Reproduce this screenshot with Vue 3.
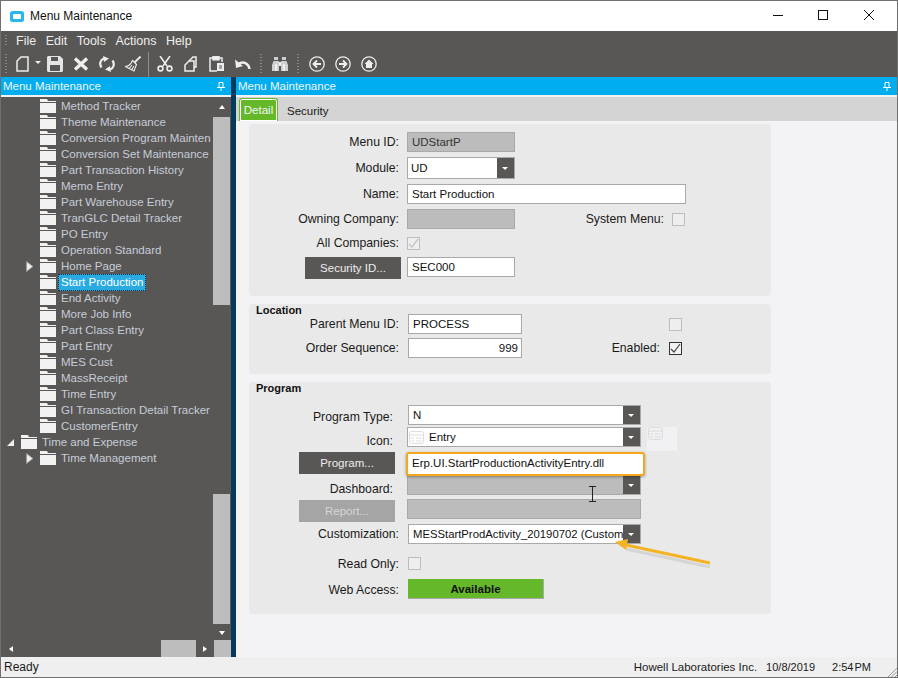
<script setup>
const menus = ['File', 'Edit', 'Tools', 'Actions', 'Help']

// top = first level node, arrow = expander shown in front of the folder
const tree = [
  { text: 'Method Tracker' },
  { text: 'Theme Maintenance' },
  { text: 'Conversion Program Mainten' },
  { text: 'Conversion Set Maintenance' },
  { text: 'Part Transaction History' },
  { text: 'Memo Entry' },
  { text: 'Part Warehouse Entry' },
  { text: 'TranGLC Detail Tracker' },
  { text: 'PO Entry' },
  { text: 'Operation Standard' },
  { text: 'Home Page', arrow: 'closed' },
  { text: 'Start Production', selected: true },
  { text: 'End Activity' },
  { text: 'More Job Info' },
  { text: 'Part Class Entry' },
  { text: 'Part Entry' },
  { text: 'MES Cust' },
  { text: 'MassReceipt' },
  { text: 'Time Entry' },
  { text: 'GI Transaction Detail Tracker' },
  { text: 'CustomerEntry' },
  { text: 'Time and Expense', top: true, arrow: 'open' },
  { text: 'Time Management', arrow: 'closed' }
]
</script>

<template>
  <div class="window">
    <div class="titlebar">
      <svg class="app-icon" width="14" height="11" viewBox="0 0 14 11">
        <rect width="14" height="11" rx="2.5" fill="#29b6ea" />
        <rect x="3" y="3" width="8" height="5" rx="1" fill="#fff" />
      </svg>
      <span class="title">Menu Maintenance</span>
      <div class="controls">
        <svg width="120" height="12" viewBox="0 0 120 12" fill="none" stroke="#111" stroke-width="1">
          <path d="M0 5.500h10" />
          <rect x="45.500" y="0.500" width="9" height="9" />
          <path d="M91 0l10 10M101 0l-10 10" />
        </svg>
      </div>
    </div>

    <div class="menubar">
      <span class="grip"></span>
      <span v-for="m in menus" :key="m" class="menu-item">{{ m }}</span>
    </div>

    <div class="toolbar">
      <span class="grip tall"></span>
      <svg class="new" width="13" height="16" viewBox="0 0 13 16" fill="none" stroke="#eee" stroke-width="1.500">
        <path d="M5 1h7v14H1V5z" />
      </svg>
      <span class="caret"></span>
      <div class="tool-group first">
        <svg width="16" height="16" viewBox="0 0 16 16" fill="#e4e4e4">
          <path d="M1 0h12l3 3v12l-1 1H1l-1-1V1zM4 1v4h7V1zM3 9v6h10V9z" fill-rule="evenodd" />
        </svg>
        <svg width="16" height="16" viewBox="0 0 16 16" fill="none" stroke="#eee" stroke-width="3.400">
          <path d="M2 2.500l12 11M14 2.500l-12 11" />
        </svg>
        <svg width="16" height="16" viewBox="0 0 16 16" fill="none" stroke="#eee" stroke-width="2.200">
          <path d="M2.500 11.500C0 8 1.500 3.500 5 2.500M13.500 4.500C16 8 14.500 12.500 11 13.500" />
          <path d="M4 0l6 2.500-5 3.500zM12 16l-6-2.500 5-3.500z" fill="#eee" stroke="none" />
        </svg>
        <svg width="16" height="16" viewBox="0 0 16 16" fill="none" stroke="#eee" stroke-width="1.100">
          <path d="M15.500 .5L9.500 6.500" stroke-width="1.800" />
          <path d="M7.500 4.500l4 4-2.500 6.500-9-4.500c4 0 6-2.500 7.500-6z" />
          <path d="M4 12.500l3-3.500M6.500 14l2.500-4" />
        </svg>
      </div>
      <span class="sep"></span>
      <div class="tool-group">
        <svg width="16" height="16" viewBox="0 0 16 16" fill="none" stroke="#eee" stroke-width="1.600">
          <path d="M3 0l7 10M13 0L6 10" />
          <circle cx="3.500" cy="12.500" r="2.400" />
          <circle cx="12.500" cy="12.500" r="2.400" />
        </svg>
        <svg width="16" height="16" viewBox="0 0 16 16" fill="none" stroke="#eee" stroke-width="1.500">
          <path d="M6 5l4-4h3v10h-2" />
          <path d="M6 5h5v10H2V9z" />
        </svg>
        <svg width="16" height="16" viewBox="0 0 16 16" fill="none" stroke="#eee" stroke-width="1.500">
          <path d="M4 2H1v13h7M10 2h3v4" />
          <rect x="4" y="0.800" width="6" height="3" fill="#eee" />
          <path d="M8 7h7v8H8z" fill="#eee" stroke="none" />
          <path d="M10 10h3M10 12h3" stroke="#595755" stroke-width="1" />
        </svg>
        <svg width="16" height="16" viewBox="0 0 16 16" fill="none" stroke="#eee" stroke-width="2.400">
          <path d="M14.500 13C14 8 9 4.500 3 8" />
          <path d="M0 3.500l1 8.500 7-2z" fill="#eee" stroke="none" />
        </svg>
      </div>
      <span class="grip tall spaced"></span>
      <svg class="binoculars" width="16" height="16" viewBox="0 0 16 16">
        <path d="M2 1h4v3H2zM10 1h4v3h-4z" fill="#cfcfcf" />
        <path d="M1.500 5H7v10H0V9zM9 5h5.500L16 9v6H9z" fill="#cfcfcf" />
        <path d="M3 8h2v7H3zM11 8h2v7h-2z" fill="#efefef" />
        <path d="M7 6h2v4H7z" fill="#efefef" />
      </svg>
      <span class="grip tall spaced"></span>
      <div class="tool-group nav">
        <svg width="16" height="16" viewBox="0 0 16 16" fill="none" stroke="#eee" stroke-width="1.300">
          <circle cx="8" cy="8" r="7.200" />
          <path d="M12 8H5M8 4.500L4.500 8 8 11.500" stroke-width="1.800" />
        </svg>
        <svg width="16" height="16" viewBox="0 0 16 16" fill="none" stroke="#eee" stroke-width="1.300">
          <circle cx="8" cy="8" r="7.200" />
          <path d="M4 8h7M8 4.500L11.500 8 8 11.500" stroke-width="1.800" />
        </svg>
        <svg width="16" height="16" viewBox="0 0 16 16" fill="none" stroke="#eee" stroke-width="1.300">
          <circle cx="8" cy="8" r="7.200" />
          <path d="M8 3.500L3.500 8H5v4h6V8h1.500z" fill="#eee" stroke="none" />
        </svg>
      </div>
    </div>

    <div class="main">
      <div class="left">
        <div class="pane-head">
          <span>Menu Maintenance</span>
          <svg class="pin" width="8" height="9" viewBox="0 0 8 9" fill="none" stroke="#fff">
            <path d="M2 .5h4v5H2zM0 5.500h8M4 6v3" />
          </svg>
        </div>
        <div class="left-body">
          <div class="tree-wrap">
            <div class="tree">
              <div v-for="item in tree" :key="item.text" class="node" :class="{ top: item.top }">
                <span class="expander">
                  <svg v-if="item.arrow === 'closed'" width="8" height="11" viewBox="0 0 8 11">
                    <path d="M.5 .5L7 5.500.5 10.500z" fill="#eee" stroke="#999" />
                  </svg>
                  <svg v-if="item.arrow === 'open'" width="7" height="7" viewBox="0 0 7 7">
                    <path d="M7 0v7H0z" fill="#eee" />
                  </svg>
                </span>
                <svg class="folder" width="16" height="14" viewBox="0 0 16 14">
                  <path d="M0 0h7l1 2h8v1H0z" fill="#f2f2f2" />
                  <path d="M0 4h16v10H0z" fill="#f2f2f2" />
                </svg>
                <span class="node-text" :class="{ selected: item.selected }">{{ item.text }}</span>
              </div>
            </div>
            <div class="vscroll">
              <span class="arrow-up"></span>
              <div class="thumb upper"></div>
              <div class="track"></div>
              <div class="thumb lower"></div>
              <span class="arrow-down"></span>
            </div>
          </div>
          <div class="hscroll">
            <span class="arrow-left"></span>
            <div class="hthumb"></div>
            <span class="arrow-right"></span>
            <div class="corner"></div>
          </div>
        </div>
      </div>

      <div class="divider"></div>

      <div class="right">
        <div class="pane-head">
          <span>Menu Maintenance</span>
          <svg class="pin" width="8" height="9" viewBox="0 0 8 9" fill="none" stroke="#fff">
            <path d="M2 .5h4v5H2zM0 5.500h8M4 6v3" />
          </svg>
        </div>
        <div class="tabs">
          <div class="tab active"><span>Detail</span></div>
          <div class="tab">Security</div>
        </div>

        <div class="content">
          <section class="panel general">
            <div class="row h20">
              <label class="lbl">Menu ID:</label>
              <div class="field disabled w108 dark-text">UDStartP</div>
            </div>
            <div class="row h22 mt5">
              <label class="lbl">Module:</label>
              <div class="field combo w108 tall-field">UD<span class="drop"></span></div>
            </div>
            <div class="row h20 mt5">
              <label class="lbl">Name:</label>
              <div class="field w279">Start Production</div>
            </div>
            <div class="row h20 mt5">
              <label class="lbl">Owning Company:</label>
              <div class="field disabled w108"></div>
              <label class="lbl side">System Menu:</label>
              <span class="check"></span>
            </div>
            <div class="row h20 mt4">
              <label class="lbl">All Companies:</label>
              <span class="check">
                <svg width="11" height="11" viewBox="0 0 11 11" fill="none" stroke="#c4c4c4" stroke-width="1.300">
                  <path d="M1 6l3 3 6-8" />
                </svg>
              </span>
            </div>
            <div class="row h22 mt4">
              <button class="btn security">Security ID...</button>
              <div class="field w108 field-top">SEC000</div>
            </div>
          </section>

          <section class="panel location">
            <h4 class="panel-title short">Location</h4>
            <div class="row h20">
              <label class="lbl">Parent Menu ID:</label>
              <div class="field w114 shift">PROCESS</div>
              <span class="check loc-check"></span>
            </div>
            <div class="row h20 mt4">
              <label class="lbl">Order Sequence:</label>
              <div class="field w114 shift num">999</div>
              <label class="lbl enabled">Enabled:</label>
              <span class="check on">
                <svg width="11" height="11" viewBox="0 0 11 11" fill="none" stroke="#444" stroke-width="1.200">
                  <path d="M1 6l3 3 6-8" />
                </svg>
              </span>
            </div>
          </section>

          <section class="panel program">
            <h4 class="panel-title">Program</h4>
            <div class="row h20">
              <label class="lbl lbl-prog low-2">Program Type:</label>
              <div class="field combo w233 shift">N<span class="drop"></span></div>
            </div>
            <div class="row h20 mt2">
              <label class="lbl lbl-prog low">Icon:</label>
              <div class="field combo w234 prog-icon">
                <svg class="entry-icon" width="15" height="13" viewBox="0 0 15 13" fill="none" stroke="#ddd">
                  <rect x=".5" y=".5" width="14" height="12" rx="2" />
                  <path d="M1 4h13M2 7h3M7 7h6M2 10h3M7 10h6" />
                </svg>
                Entry<span class="drop"></span>
              </div>
              <div class="icon-preview">
                <svg width="15" height="13" viewBox="0 0 15 13" fill="none" stroke="#dcdcdc">
                  <rect x=".5" y=".5" width="14" height="12" rx="2" />
                  <path d="M1 4h13M2 7h3M7 7h6M2 10h3M7 10h6" />
                </svg>
              </div>
            </div>
            <div class="row h24 mt5">
              <button class="btn prog-btn">Program...</button>
              <div class="callout">Erp.UI.StartProductionActivityEntry.dll</div>
            </div>
            <div class="row h20 up1">
              <label class="lbl lbl-prog low">Dashboard:</label>
              <div class="field combo disabled w234"><span class="drop"></span></div>
            </div>
            <div class="row h22 mt4">
              <button class="btn prog-btn off">Report...</button>
              <div class="field disabled w234 field-top"></div>
            </div>
            <div class="row h20 mt3">
              <label class="lbl">Customization:</label>
              <div class="field combo w233 shift tight">MESStartProdActivity_20190702 (Custom<span class="drop"></span></div>
            </div>
            <div class="row h14 mt12">
              <label class="lbl low-1">Read Only:</label>
              <span class="check shift"></span>
            </div>
            <div class="row h20 mt9">
              <label class="lbl low-1">Web Access:</label>
              <div class="available shift">Available</div>
            </div>
          </section>

          <svg class="annot" width="110" height="50" viewBox="0 0 110 50">
            <path d="M98 32L14 14" stroke="#888" stroke-opacity=".2" stroke-width="3" transform="translate(0 3)" />
            <path d="M98 31L14 13" stroke="#f5b324" stroke-width="3" />
            <path d="M3 10l13-3-2 11z" fill="#f5b324" />
          </svg>
          <svg class="ibeam" width="9" height="16" viewBox="0 0 9 16" fill="none" stroke="#222">
            <path d="M1 .5h7M1 15.500h7M4.500 1v14" />
          </svg>
        </div>
      </div>
    </div>

    <div class="statusbar">
      <span class="ready">Ready</span>
      <span class="company">Howell Laboratories Inc.</span>
      <span class="date">10/8/2019</span>
      <span class="time">2:54 PM</span>
      <svg class="size-grip" width="10" height="10" viewBox="0 0 10 10" stroke="#999" fill="none">
        <path d="M10 1L1 10M10 4.500L4.500 10M10 8L8 10" />
      </svg>
    </div>
  </div>
</template>

<style>
html, body {
  margin: 0;
  background: #fff;
}
</style>

<style scoped>
.window {
  width: 898px;
  height: 678px;
  box-sizing: border-box;
  border: 1px solid #707070;
  display: flex;
  flex-direction: column;
  overflow: hidden;
  position: relative;
  font-family: "Liberation Sans", Arial, sans-serif;
  font-size: 11.500px;
  color: #1a1a1a;
  background: #fff;
}

.titlebar {
  height: 30px;
  display: flex;
  align-items: center;
  flex-shrink: 0;
  padding-left: 9px;
}
.title {
  margin-left: 6px;
  color: #111;
  font-size: 12px;
}
.controls {
  margin-left: auto;
  margin-right: 4px;
  display: flex;
}

.menubar {
  height: 20px;
  background: #595755;
  display: flex;
  align-items: center;
  color: #eee;
  flex-shrink: 0;
  padding-left: 4px;
  font-size: 12.500px;
}
.menu-item {
  margin-left: 9px;
}
.menu-item + .menu-item {
  margin-left: 9.500px;
}
.grip {
  width: 2px;
  height: 12px;
  background: repeating-linear-gradient(#8a8886 0 1px, transparent 1px 3px);
}
.grip.tall {
  height: 20px;
}

.toolbar {
  height: 26px;
  background: #595755;
  display: flex;
  align-items: center;
  flex-shrink: 0;
  padding-left: 4px;
}
.new {
  margin-left: 9px;
}
.caret {
  margin-left: 6px;
  margin-bottom: 3px;
  border: 3px solid transparent;
  border-top-color: #eee;
  border-bottom-width: 0;
}
.tool-group {
  display: flex;
  gap: 10px;
}
.tool-group.first {
  margin-left: 6px;
}
.sep {
  width: 1px;
  height: 25px;
  background: #8f8d8b;
  margin: 0 8px 0 7px;
}
.grip.spaced {
  margin-left: 9px;
}
.binoculars {
  margin-left: 10px;
}
.nav {
  margin-left: 10px;
}

.main {
  flex: 1;
  display: flex;
  min-height: 0;
}

.left {
  width: 230px;
  display: flex;
  flex-direction: column;
  background: #595755;
  flex-shrink: 0;
}
.divider {
  width: 5px;
  background: #063a5c;
  flex-shrink: 0;
}
.right {
  flex: 1;
  display: flex;
  flex-direction: column;
  min-width: 0;
}

.pane-head {
  height: 18px;
  background: #00aeef;
  color: #f4f4f4;
  display: flex;
  align-items: center;
  justify-content: space-between;
  padding: 0 6px 0 2px;
  flex-shrink: 0;
}
.pin {
  display: block;
}

.left-body {
  flex: 1;
  min-height: 0;
  display: flex;
  flex-direction: column;
  border-top: 2px solid #f2f2f2;
}
.tree-wrap {
  flex: 1;
  min-height: 0;
  display: flex;
}
.tree {
  width: 212px;
  overflow: hidden;
  padding-top: 1px;
  box-sizing: border-box;
}
.node {
  height: 16px;
  display: flex;
  align-items: center;
  white-space: nowrap;
  padding-left: 25px;
  color: #c6ccd8;
}
.node.top {
  padding-left: 6px;
}
.expander {
  width: 14px;
  height: 14px;
  display: flex;
  align-items: center;
  flex-shrink: 0;
}
.node .folder {
  flex-shrink: 0;
}
.node-text {
  padding: 0 2px;
  line-height: 15px;
  border: 1px solid transparent;
  margin-left: 2px;
}
.node-text.selected {
  background: #29abe2;
  color: #fff;
  border: 1px dotted #0b2a3a;
}

.vscroll {
  width: 17px;
  display: flex;
  flex-direction: column;
  align-items: center;
  flex-shrink: 0;
}
.arrow-up {
  margin-top: 8px;
  margin-bottom: 8px;
  border: 4px solid transparent;
  border-top-width: 0;
  border-bottom: 4px solid #fff;
  border-left-width: 3.500px;
  border-right-width: 3.500px;
  flex-shrink: 0;
}
.thumb {
  width: 17px;
  background: #bdbdbd;
}
.thumb.upper {
  height: 188px;
}
.track {
  height: 189px;
}
.thumb.lower {
  height: 130px;
}
.arrow-down {
  margin-top: 7px;
  border: 3.500px solid transparent;
  border-top: 4px solid #fff;
  border-bottom-width: 0;
}

.hscroll {
  height: 17px;
  display: flex;
  align-items: center;
  flex-shrink: 0;
}
.arrow-left {
  margin-left: 8px;
  border: 3.500px solid transparent;
  border-right: 4px solid #fff;
  border-left-width: 0;
}
.hthumb {
  width: 36px;
  height: 17px;
  background: #bdbdbd;
  margin-left: 148px;
}
.arrow-right {
  margin-left: 7px;
  border: 3.500px solid transparent;
  border-left: 4px solid #fff;
  border-right-width: 0;
}
.corner {
  width: 17px;
  height: 17px;
  background: #bdbdbd;
  margin-left: 7px;
}

.tabs {
  height: 24px;
  margin-top: 2px;
  background: #d4d4d4;
  display: flex;
  align-items: flex-end;
  padding-left: 3px;
  flex-shrink: 0;
  box-shadow: 0 -2px 0 #f2f2f2;
}
.tab {
  height: 23px;
  line-height: 27px;
  padding: 0 9px;
  color: #1a1a1a;
}
.tab.active {
  width: 39px;
  box-sizing: border-box;
  padding: 0;
  background: #65b82a;
  border: 1px solid #65b82a;
  border-bottom: 0;
  border-radius: 3px 3px 0 0;
  color: #f4f4f4;
  line-height: 23px;
  text-align: center;
  box-shadow: inset 0 0 0 1px #fff;
}

.content {
  flex: 1;
  min-height: 0;
  background: #f3f3f5;
  padding: 3px 0 0 13px;
  position: relative;
}

.panel {
  width: 522px;
  background: #e9e9e9;
  border-radius: 4px;
  box-sizing: border-box;
}
.general {
  height: 172px;
  padding-top: 8px;
}
.location {
  height: 70px;
  margin-top: 8px;
}
.program {
  height: 232px;
  margin-top: 8px;
}
.panel-title {
  margin: 0;
  padding-left: 7px;
  height: 23px;
  font-size: 11px;
  font-weight: bold;
  line-height: 12px;
  color: #111;
}
.panel-title.short {
  height: 10px;
}

.row {
  display: flex;
  align-items: center;
}
.h14 { height: 14px; }
.h20 { height: 20px; }
.h22 { height: 22px; }
.h24 { height: 24px; }
.mt2 { margin-top: 2px; }
.mt3 { margin-top: 3px; }
.mt4 { margin-top: 4px; }
.mt5 { margin-top: 5px; }
.mt9 { margin-top: 9px; }
.mt12 { margin-top: 12px; }
.up1 { margin-top: -1px; }

.lbl {
  width: 150px;
  text-align: right;
  white-space: nowrap;
  flex-shrink: 0;
  margin-right: 8px;
  color: #1a1a1a;
  font-size: 12.250px;
}
.lbl-prog {
  width: 144px;
  margin-right: 14px;
}
.lbl.low {
  margin-top: 8px;
}
.lbl.low-2 {
  margin-top: 4px;
}
.lbl.low-1 {
  margin-top: 2px;
}
.lbl.side {
  width: 149px;
  margin-right: 8px;
}
.lbl.enabled {
  width: 138px;
  margin-right: 9px;
}

.field {
  height: 20px;
  box-sizing: border-box;
  border: 1px solid #a9a9a9;
  background: #fff;
  line-height: 18px;
  padding-left: 4px;
  flex-shrink: 0;
  position: relative;
  white-space: nowrap;
  overflow: hidden;
  color: #111;
}
.tall-field {
  height: 22px;
  line-height: 20px;
  padding-left: 3px;
}
.field-top {
  align-self: flex-start;
}
.field.disabled {
  background: #bcbcbc;
}
.dark-text {
  color: #333;
}
.w108 { width: 108px; }
.w114 { width: 114px; }
.w233 { width: 233px; }
.w234 { width: 234px; }
.w279 { width: 279px; }
.shift {
  margin-left: 1px;
}
.tight {
  font-size: 11.300px;
}
.num {
  text-align: right;
  padding-right: 3px;
}
.combo {
  padding-right: 18px;
}
.prog-icon {
  display: flex;
  align-items: center;
  padding-left: 1px;
}
.entry-icon {
  margin-right: 5px;
}
.drop {
  position: absolute;
  right: 0;
  top: 0;
  bottom: 0;
  width: 17px;
  background: #595755;
}
.drop::after {
  content: "";
  position: absolute;
  left: 5px;
  top: 50%;
  margin-top: -1px;
  border: 3px solid transparent;
  border-top: 3px solid #fff;
  border-bottom-width: 0;
}

.icon-preview {
  width: 30px;
  height: 24px;
  background: #f1f1f3;
  margin-left: 6px;
  align-self: flex-start;
  padding-left: 1px;
  box-sizing: border-box;
}

.check {
  width: 13px;
  height: 13px;
  box-sizing: border-box;
  border: 1px solid #bdbdbd;
  background: #eeeeee;
  display: flex;
  align-items: center;
  justify-content: center;
  flex-shrink: 0;
}
.check.on {
  border-color: #333;
  background: #f3f3f3;
}
.loc-check {
  margin-left: 147px;
}

.btn {
  width: 96px;
  height: 22px;
  border: 0;
  padding: 0;
  background: #595755;
  color: #eee;
  font: inherit;
  flex-shrink: 0;
}
.btn.security {
  margin-left: 56px;
  margin-right: 6px;
}
.btn.prog-btn {
  margin-left: 50px;
  margin-right: 11px;
}
.row.h24 .prog-btn {
  align-self: flex-start;
}
.btn.off {
  background: #a5a5a5;
  color: #d6d6d6;
  margin-right: 12px;
  margin-top: 1px;
}

.callout {
  width: 239px;
  height: 24px;
  box-sizing: border-box;
  border: 2px solid #f5a81c;
  border-radius: 3px;
  background: #fff;
  box-shadow: 0 1px 3px rgba(0, 0, 0, 0.35);
  padding-left: 4px;
  line-height: 18px;
  color: #111;
  white-space: nowrap;
  z-index: 1;
}

.available {
  width: 136px;
  height: 20px;
  box-sizing: border-box;
  background: #65b82a;
  border-right: 1px solid #a9a9a9;
  border-bottom: 1px solid #a9a9a9;
  font-weight: bold;
  color: #111;
  text-align: center;
  line-height: 20px;
}

/* hand drawn arrow and the mouse cursor lie over the form */
.annot {
  position: absolute;
  left: 376px;
  top: 411px;
}
.ibeam {
  position: absolute;
  left: 352px;
  top: 365px;
}

.statusbar {
  height: 20px;
  background: #efefef;
  display: flex;
  align-items: center;
  flex-shrink: 0;
  color: #1a1a1a;
}
.ready {
  margin-left: 3px;
  font-size: 12px;
}
.company {
  margin-left: auto;
}
.date {
  margin-left: 9px;
  font-size: 11px;
}
.time {
  margin-left: 17px;
  margin-right: 16px;
  font-size: 11px;
  word-spacing: -2px;
}
.size-grip {
  align-self: flex-end;
}
</style>
